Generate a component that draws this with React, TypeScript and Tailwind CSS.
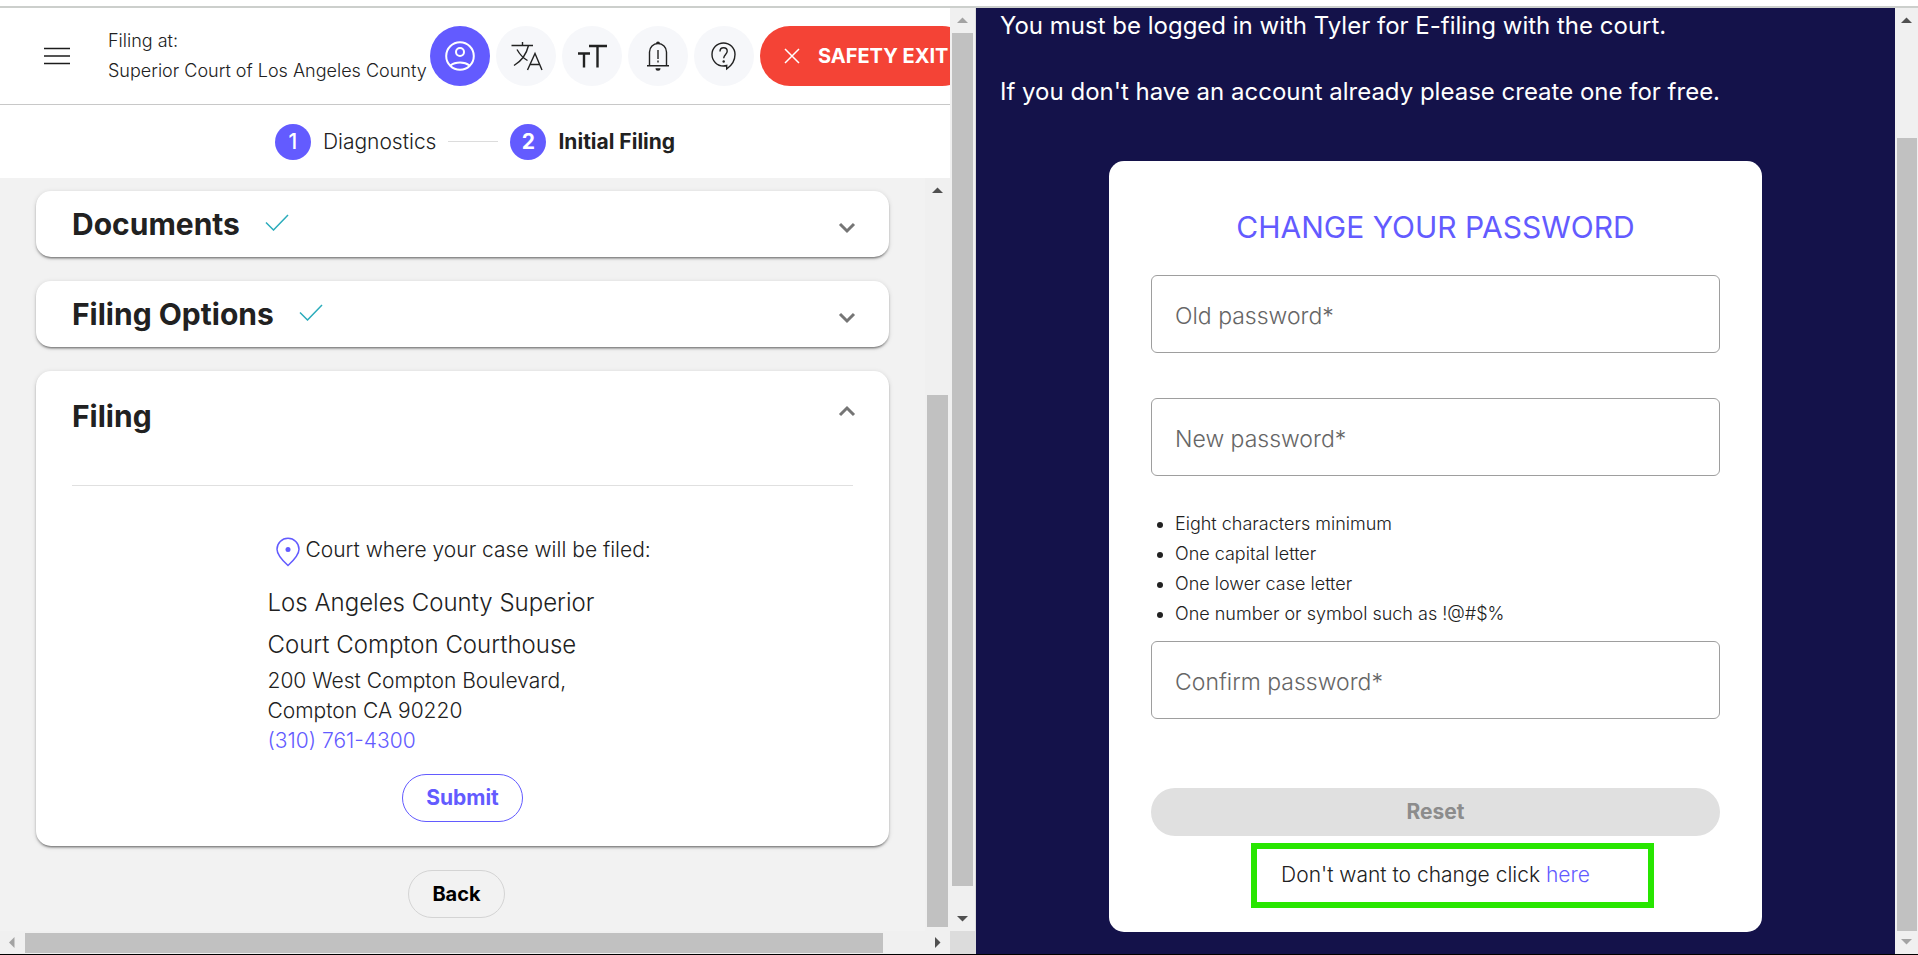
import type { ReactNode } from 'react'
import clsx from 'clsx'

type Direction = 'up' | 'down' | 'left' | 'right'

const arrowPaths: Record<Direction, string> = {
  up: 'M0 9 5.5 3.5 11 9z',
  down: 'M0 2 11 2 5.5 7.5z',
  left: 'M8.5 0 8.5 11 3 5.5z',
  right: 'M2 0 2 11 7.5 5.5z',
}

function ScrollArrow({ direction, disabled }: { direction: Direction; disabled?: boolean }) {
  return (
    <span className="flex size-[23px] shrink-0 items-center justify-center" aria-hidden="true">
      <svg viewBox="0 0 11 11" className={clsx('size-[11px]', disabled ? 'fill-[#a3a3a3]' : 'fill-[#505050]')}>
        <path d={arrowPaths[direction]} />
      </svg>
    </span>
  )
}

function IconSvg({ children }: { children: ReactNode }) {
  return (
    <svg
      viewBox="0 0 30 30"
      className="size-[30px] shrink-0 overflow-visible"
      fill="none"
      stroke="currentColor"
      strokeWidth="1.4"
      aria-hidden="true"
    >
      {children}
    </svg>
  )
}

const headerActions = [
  {
    label: 'Account',
    active: true,
    icon: (
      <IconSvg>
        <circle cx="15" cy="15" r="13.8" strokeWidth="2" />
        <circle cx="15" cy="11" r="4" strokeWidth="2" />
        <path d="M5.5 24.5c2.5-2 5.5-3 9.5-3s7 1 9.5 3" strokeWidth="2" />
      </IconSvg>
    ),
  },
  {
    label: 'Language',
    icon: (
      <IconSvg>
        <path d="M.5 4.5H22M11.5 1v3.5M17.5 4.5C15.5 13 10.5 20 3 24.5M6 8.5C8.5 13 12 17 16.5 19.5M16.5 29 24 12.5 31 29M19 23.5h10" />
      </IconSvg>
    ),
  },
  {
    label: 'Text size',
    icon: (
      <IconSvg>
        <path d="M12 5h18M20.5 5v21.5M1 12.5h12M7 12.5v14" strokeWidth="2.4" />
      </IconSvg>
    ),
  },
  {
    label: 'Notifications',
    icon: (
      <IconSvg>
        <path d="M4 24.7h22M6.5 24.7V11a8.5 8.5 0 0 1 17 0v13.7M15 9v9M15 19.5v2" />
        <path d="M13 2.5a2 2 0 0 1 4 0zM12.5 27.2h5a2.5 2.5 0 0 1-5 0z" fill="currentColor" stroke="none" />
      </IconSvg>
    ),
  },
  {
    label: 'Help',
    icon: (
      <IconSvg>
        <path d="M17.7 24.5V28c5-3.5 8.3-9 8.3-14.5A11.5 11.5 0 1 0 14.5 25c1.2 0 2.2-.2 3.2-.5z" />
        <path d="M11 10.5c0-2.3 1.5-3.7 3.6-3.7s3.6 1.3 3.6 3.4c0 3-3.5 3.500-3.500 7" />
        <circle cx="14.7" cy="20.5" r="1.2" fill="currentColor" stroke="none" />
      </IconSvg>
    ),
  },
]

function Header() {
  return (
    <header className="flex h-[97px] shrink-0 items-center overflow-hidden border-b border-[#c8c8c8] bg-white">
      <button type="button" aria-label="Menu" className="ml-11 shrink-0">
        <svg viewBox="0 0 26 18" className="h-[18px] w-[26px]" stroke="#1c1c1c" strokeWidth="1.4" aria-hidden="true">
          <path d="M0 1.5h26M0 9h26M0 16.5h26" />
        </svg>
      </button>
      <p className="ml-[38px] w-[322px] shrink-0 text-[18px] leading-[30px] font-light whitespace-nowrap">
        Filing at:
        <br />
        Superior Court of Los Angeles County
      </p>
      <div className="flex shrink-0 gap-1.5">
        {headerActions.map((action) => (
          <button
            key={action.label}
            type="button"
            aria-label={action.label}
            className={clsx(
              'flex size-[60px] items-center justify-center rounded-full',
              action.active ? 'bg-[#635bff] text-white' : 'bg-[#f6f7fa] text-[#222]',
            )}
          >
            {action.icon}
          </button>
        ))}
        <button
          type="button"
          className="flex h-[60px] items-center gap-[18px] rounded-full bg-[#f44336] px-6 text-[20px] font-bold whitespace-nowrap text-white"
        >
          <svg viewBox="0 0 16 16" className="size-4" stroke="currentColor" strokeWidth="1.5" aria-hidden="true">
            <path d="M1 1l14 14M15 1 1 15" />
          </svg>
          SAFETY EXIT
        </button>
      </div>
    </header>
  )
}

function Stepper() {
  return (
    <ol className="flex h-[73px] shrink-0 items-center justify-center gap-3 bg-white text-[21px]">
      <li className="flex items-center gap-3">
        <span className="flex size-9 items-center justify-center rounded-full bg-[#635bff] font-medium text-white">1</span>
        <span className="font-light">Diagnostics</span>
      </li>
      <li aria-hidden="true" className="h-px w-[50px] bg-[#dcdcdc]" />
      <li className="flex items-center gap-3 font-bold" aria-current="step">
        <span className="flex size-9 items-center justify-center rounded-full bg-[#635bff] text-white">2</span>
        <span>Initial Filing</span>
      </li>
    </ol>
  )
}

function Chevron({ open }: { open?: boolean }) {
  return (
    <svg viewBox="0 0 18 12" className="h-3 w-[18px]" fill="none" stroke="#757575" strokeWidth="3" aria-hidden="true">
      <path d={open ? 'M2 10 9 3l7 7' : 'M2 2l7 7 7-7'} />
    </svg>
  )
}

const cardShadow =
  'shadow-[0_3px_1px_-2px_rgba(0,0,0,0.2),0_2px_2px_0_rgba(0,0,0,0.24),0_1px_5px_0_rgba(0,0,0,0.14)]'

function CollapsedPanel({ title }: { title: string }) {
  return (
    <section className={clsx('rounded-[15px] bg-white', cardShadow)}>
      <button type="button" aria-expanded="false" className="flex h-[66px] w-full items-center pr-[33px] pl-9">
        <h2 className="text-[30px] leading-9 font-bold">{title}</h2>
        <svg
          viewBox="0 0 24 18"
          className="mb-1 ml-[25px] h-[18px] w-6"
          fill="none"
          stroke="#2bacbb"
          strokeWidth="1.5"
          aria-label="Complete"
        >
          <path d="M1 9.5 8.5 17 23 2" />
        </svg>
        <span className="mt-2 ml-auto">
          <Chevron />
        </span>
      </button>
    </section>
  )
}

function FilingPanel() {
  return (
    <section className={clsx('rounded-[15px] bg-white px-9 pt-[27px] pb-6', cardShadow)}>
      <button type="button" aria-expanded="true" className="flex w-[calc(100%+3px)] items-start justify-between">
        <h2 className="text-[30px] leading-9 font-bold">Filing</h2>
        <span className="pt-[7px]">
          <Chevron open />
        </span>
      </button>
      <hr className="mt-[51px] border-[#e0e0e0]" />
      <div className="mx-auto mt-[49px] w-[390px]">
        <p className="flex items-center gap-1 pl-2 text-[21px] leading-[30px] font-light whitespace-nowrap">
          <svg
            viewBox="0 0 26 30"
            className="mt-0.5 -mb-0.5 h-[30px] w-[26px]"
            fill="none"
            stroke="#635bff"
            strokeWidth="1.5"
            aria-hidden="true"
          >
            <path d="M12 28.5C6.500 23.5 1 18 1 12.2a11 11 0 0 1 22 0C23 18 17.5 23.5 12 28.5z" />
            <circle cx="12" cy="12.5" r="2.5" fill="#635bff" stroke="none" />
          </svg>
          Court where your case will be filed:
        </p>
        <h3 className="mt-[17px] text-[24px] leading-[42px] font-light">
          Los Angeles County Superior
          <br />
          Court Compton Courthouse
        </h3>
        <address className="text-[21px] leading-[30px] font-light not-italic">
          200 West Compton Boulevard,
          <br />
          Compton CA 90220
          <br />
          <a href="tel:+13107614300" className="text-[#635bff]">
            (310) 761-4300
          </a>
        </address>
      </div>
      <button
        type="button"
        className="mx-auto mt-[18px] flex h-12 items-center rounded-full border border-[#635bff] px-[23px] text-[21px] font-bold text-[#635bff]"
      >
        Submit
      </button>
    </section>
  )
}

function FilingPane() {
  return (
    <div className="grid min-w-0 grid-cols-[minmax(0,1fr)_26px] grid-rows-[minmax(0,1fr)_23px] bg-[#f0f0f0]">
      <div className="flex min-w-0 flex-col">
        <Header />
        <Stepper />
        <div className="flex flex-1 bg-[#f2f2f2]">
          <main className="flex min-w-0 flex-1 flex-col gap-6 px-9 py-[13px]">
            <CollapsedPanel title="Documents" />
            <CollapsedPanel title="Filing Options" />
            <FilingPanel />
            <button
              type="button"
              className="mr-3 flex h-12 items-center self-center rounded-full border border-[#d4d4d4] px-[23px] text-[20px] font-bold text-black"
            >
              Back
            </button>
          </main>
          <div className="flex w-[25px] shrink-0 flex-col items-center bg-[#f0f0f0]">
            <ScrollArrow direction="up" />
            <div className="grow-[194]" />
            <div className="mb-1 w-[21px] grow-[532] bg-[#c1c1c1]" />
          </div>
        </div>
      </div>
      <div className="flex flex-col items-center border-r border-[#dcdcdc]">
        <ScrollArrow direction="up" disabled />
        <div className="mt-0.5 w-[21px] grow-[853] bg-[#c1c1c1]" />
        <div className="grow-[22]" />
        <ScrollArrow direction="down" />
      </div>
      <div className="flex items-center">
        <ScrollArrow direction="left" disabled />
        <div className="ml-0.5 h-5 grow-[858] bg-[#c1c1c1]" />
        <div className="grow-[44]" />
        <ScrollArrow direction="right" />
      </div>
      <div className="bg-[#dcdcdc]" />
    </div>
  )
}

function PasswordField({ id, label, className }: { id: string; label: string; className?: string }) {
  return (
    <div className={clsx('relative', className)}>
      <input
        id={id}
        type="password"
        required
        className="block h-[78px] w-full rounded-md border border-[#9e9e9e] px-6 text-[23px] font-light"
      />
      <label
        htmlFor={id}
        className="pointer-events-none absolute inset-y-0 left-6 flex items-center pt-1 text-[23px] font-light text-[#666]"
      >
        {label}
        <span>*</span>
      </label>
    </div>
  )
}

const passwordRules = [
  'Eight characters minimum',
  'One capital letter',
  'One lower case letter',
  'One number or symbol such as !@#$%',
]

function PasswordPane() {
  return (
    <div className="flex min-w-0 bg-[#14124a]">
      <div className="min-w-0 flex-1 px-6 pt-px pb-[22px]">
        <p className="text-[24px] leading-[34px] text-white">You must be logged in with Tyler for E-filing with the court.</p>
        <p className="mt-8 text-[24px] leading-[34px] text-white">
          If you don't have an account already please create one for free.
        </p>
        <form className="mx-auto mt-[52px] flex max-w-[653px] flex-col rounded-[15px] bg-white px-[42px] pt-12 pb-6">
          <h1 className="text-center text-[30px] leading-9 text-[#635bff]">CHANGE YOUR PASSWORD</h1>
          <PasswordField id="old-password" label="Old password" className="mt-[30px]" />
          <PasswordField id="new-password" label="New password" className="mt-[45px]" />
          <ul className="mt-[33px] list-disc pl-6 text-[18px] leading-[30px] font-light">
            {passwordRules.map((rule) => (
              <li key={rule}>{rule}</li>
            ))}
          </ul>
          <PasswordField id="confirm-password" label="Confirm password" className="mt-3" />
          <button
            type="submit"
            disabled
            className="mt-[69px] h-12 rounded-full bg-[#e0e0e0] text-[21px] font-bold text-[#8c8c8c]"
          >
            Reset
          </button>
          <p className="relative mt-[7px] self-center pt-4 pb-[18px] text-[21px] leading-[31px] font-light">
            Don't want to change click{' '}
            <a href="#" className="text-[#635bff]">
              here
            </a>
            <span className="pointer-events-none absolute inset-y-0 -right-16 -left-[30px] border-6 border-[#28e600]" />
          </p>
        </form>
      </div>
      <div className="flex w-[23px] shrink-0 flex-col items-center bg-[#f0f0f0]">
        <ScrollArrow direction="up" />
        <div className="grow-[107]" />
        <div className="w-5 grow-[793] bg-[#c1c1c1]" />
        <ScrollArrow direction="down" disabled />
      </div>
    </div>
  )
}

export default function App() {
  return (
    <div className="flex min-h-screen flex-col border-b border-black bg-white pt-1.5 font-['Inter',sans-serif] text-[#212121]">
      <div className="grid flex-1 grid-cols-[976fr_942fr] border-t-2 border-[#cccfcc]">
        <FilingPane />
        <PasswordPane />
      </div>
    </div>
  )
}
